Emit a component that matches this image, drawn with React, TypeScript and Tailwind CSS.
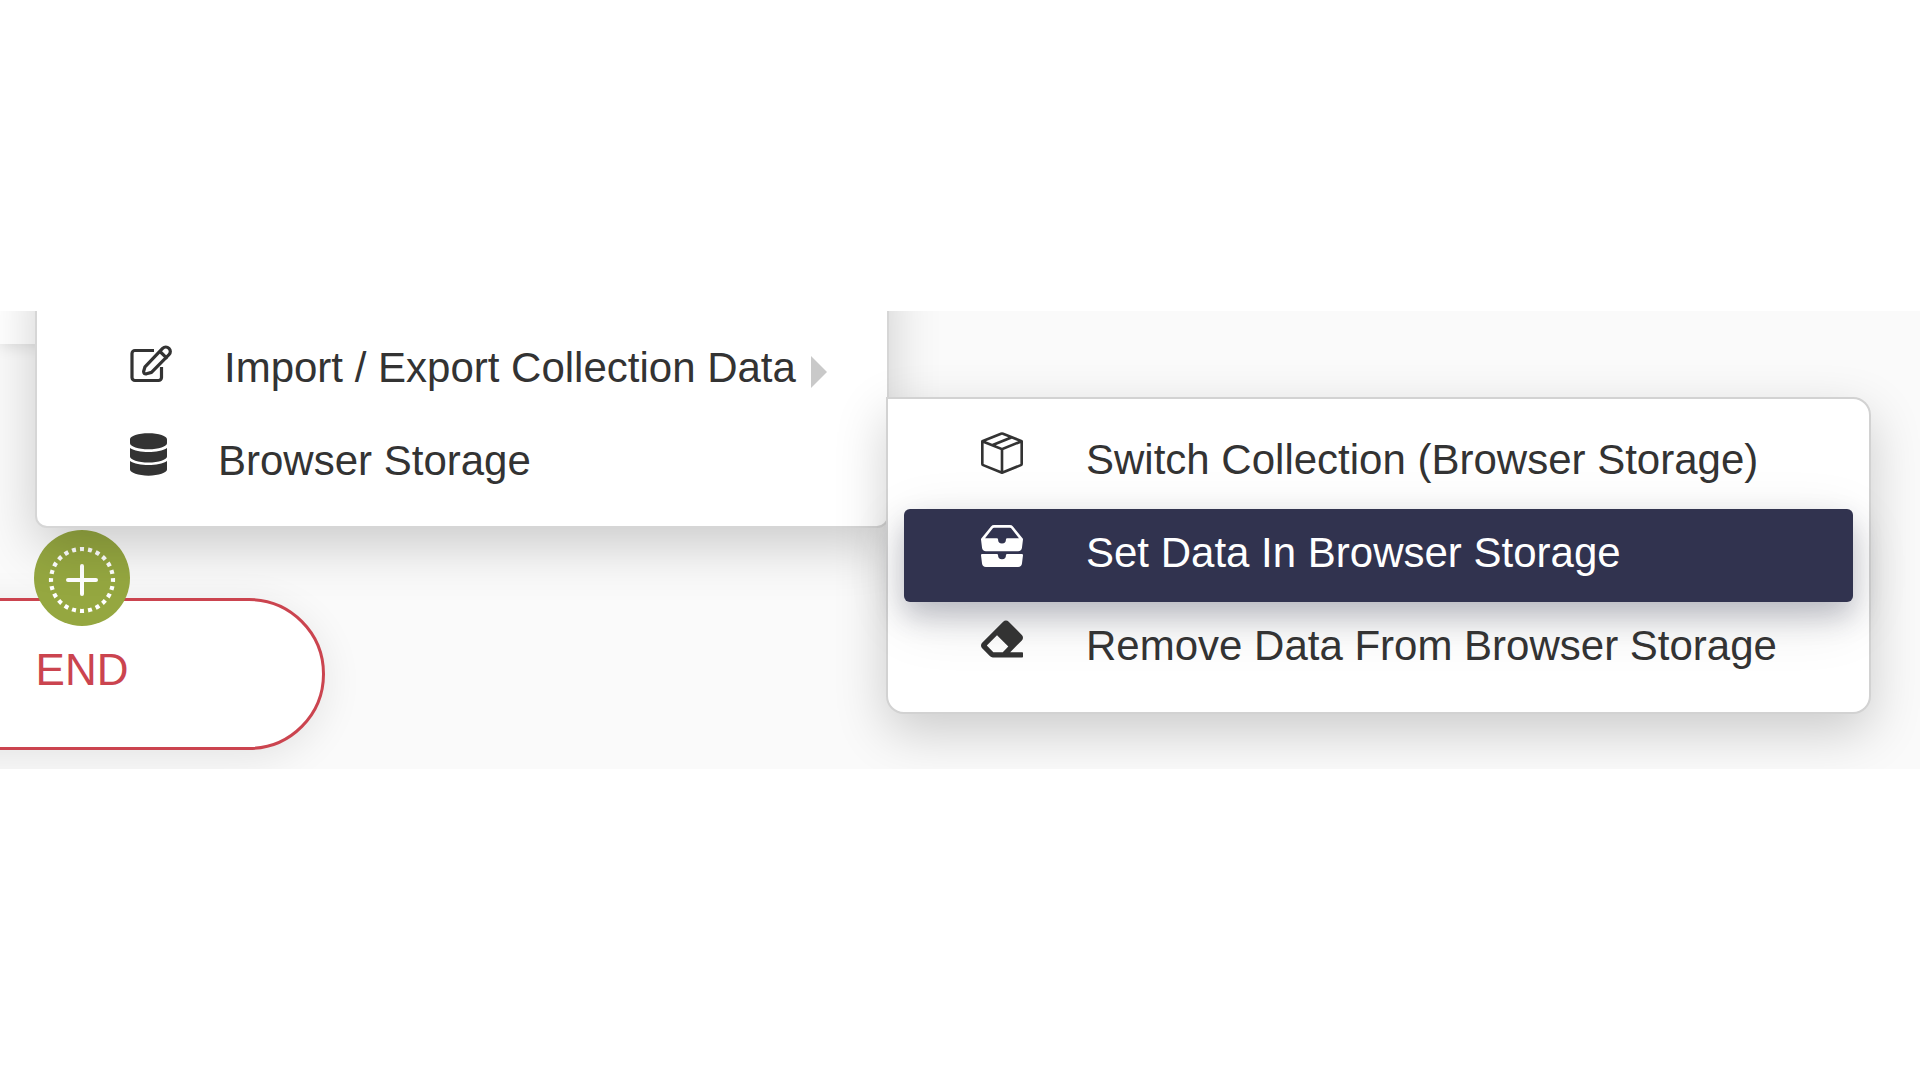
import type { ReactNode } from "react";
import { BsBoxSeam, BsInboxesFill } from "react-icons/bs";
import { FaDatabase, FaEraser } from "react-icons/fa";

function EditIcon() {
  return (
    <svg
      viewBox="0 0 43 43"
      className="h-[43px] w-[43px] shrink-0"
      fill="none"
      stroke="currentColor"
      strokeWidth="3.200"
      strokeLinecap="round"
      strokeLinejoin="round"
      aria-hidden="true"
    >
      <path
        strokeLinecap="butt"
        d="M24 10.500H5a3 3 0 0 0-3 3V37.500a3 3 0 0 0 3 3H28.500a3 3 0 0 0 3-3V27"
      />
      <path d="M15 26.800 32.600 8.300a4.600 4.600 0 0 1 6.400 0 4.400 4.400 0 0 1 0 6.300L21.500 32.400 16.500 33.800Q13.600 34.200 13.600 31.500Z" />
      <path d="M30.500 12 36.300 17.600" />
    </svg>
  );
}

function AddIcon() {
  return (
    <svg viewBox="0 0 96 96" className="h-24 w-24" fill="none" stroke="#fff" aria-hidden="true">
      <circle
        cx="48"
        cy="50"
        r="31"
        strokeWidth="4.200"
        pathLength="192"
        strokeDasharray="4 4"
        strokeDashoffset="2"
      />
      <path d="M48 36v28M34 50h28" strokeWidth="4" strokeLinecap="round" />
    </svg>
  );
}

interface MenuItemProps {
  icon: ReactNode;
  label: string;
  className?: string;
  hasChildren?: boolean;
}

function MenuItem({ icon, label, className = "", hasChildren }: MenuItemProps) {
  return (
    <li>
      <button
        type="button"
        className={`flex w-full items-start rounded-md pt-4 pb-[21px] pl-[77px] text-left text-[42px] leading-[56px] whitespace-nowrap ${className}`}
      >
        {icon}
        <span>{label}</span>
        {hasChildren && (
          <svg viewBox="0 0 16 32" className="mt-4 -ml-9 h-8 w-4 shrink-0" aria-hidden="true">
            <path d="M0 0 16 16 0 32Z" fill="#c9c9c9" />
          </svg>
        )}
      </button>
    </li>
  );
}

export default function App() {
  return (
    <main className="flex min-h-screen items-center bg-white font-['Liberation_Sans',Arial,sans-serif] text-[#333]">
      <section className="relative h-[458px] w-full overflow-hidden bg-[#fafafa]">
        <div className="h-[33px] w-1/5 bg-white shadow-[0_2px_16px_rgba(0,0,0,0.12)]" />

        {/* end node */}
        <div className="absolute top-[287px] -left-[161px] flex h-[152px] w-[486px] items-center justify-center rounded-full border-3 border-[#cb444f] bg-white pb-2 text-[44px] text-[#cb444f] shadow-[0_8px_40px_rgba(0,0,0,0.09)]">
          END
        </div>
        <button
          type="button"
          aria-label="Add step"
          className="absolute top-[219px] left-[34px] rounded-full bg-[#95a740]"
        >
          <AddIcon />
        </button>

        {/* context menu */}
        <ul className="absolute -top-16 left-[35px] w-[854px] rounded-xl border-2 border-[#d6d6d6] bg-white px-4 pt-[75px] pb-4 shadow-[0_18px_52px_rgba(0,0,0,0.19)]">
          <MenuItem
            icon={<EditIcon />}
            label="Import / Export Collection Data"
            className="gap-[51px]"
            hasChildren
          />
          <MenuItem
            icon={<FaDatabase className="h-[43px] w-[37px] shrink-0" />}
            label="Browser Storage"
            className="gap-[51px]"
          />
        </ul>

        {/* submenu */}
        <ul className="absolute top-[86px] left-[886px] w-[985px] rounded-[18px] rounded-tl-none border-2 border-[#d2d2d2] bg-white px-4 pt-[17px] pb-[17px] shadow-[0_18px_52px_rgba(0,0,0,0.19)]">
          <MenuItem
            icon={<BsBoxSeam className="h-[42px] w-[42px] shrink-0" />}
            label="Switch Collection (Browser Storage)"
            className="gap-[63px]"
          />
          <MenuItem
            icon={<BsInboxesFill className="h-[42px] w-[42px] shrink-0" />}
            label="Set Data In Browser Storage"
            className="gap-[63px] bg-[#31334f] text-white shadow-[0_14px_28px_rgba(49,51,79,0.25),0_16px_60px_rgba(0,0,0,0.12)]"
          />
          <MenuItem
            icon={<FaEraser className="h-[42px] w-[42px] shrink-0" />}
            label="Remove Data From Browser Storage"
            className="gap-[63px]"
          />
        </ul>
      </section>
    </main>
  );
}
